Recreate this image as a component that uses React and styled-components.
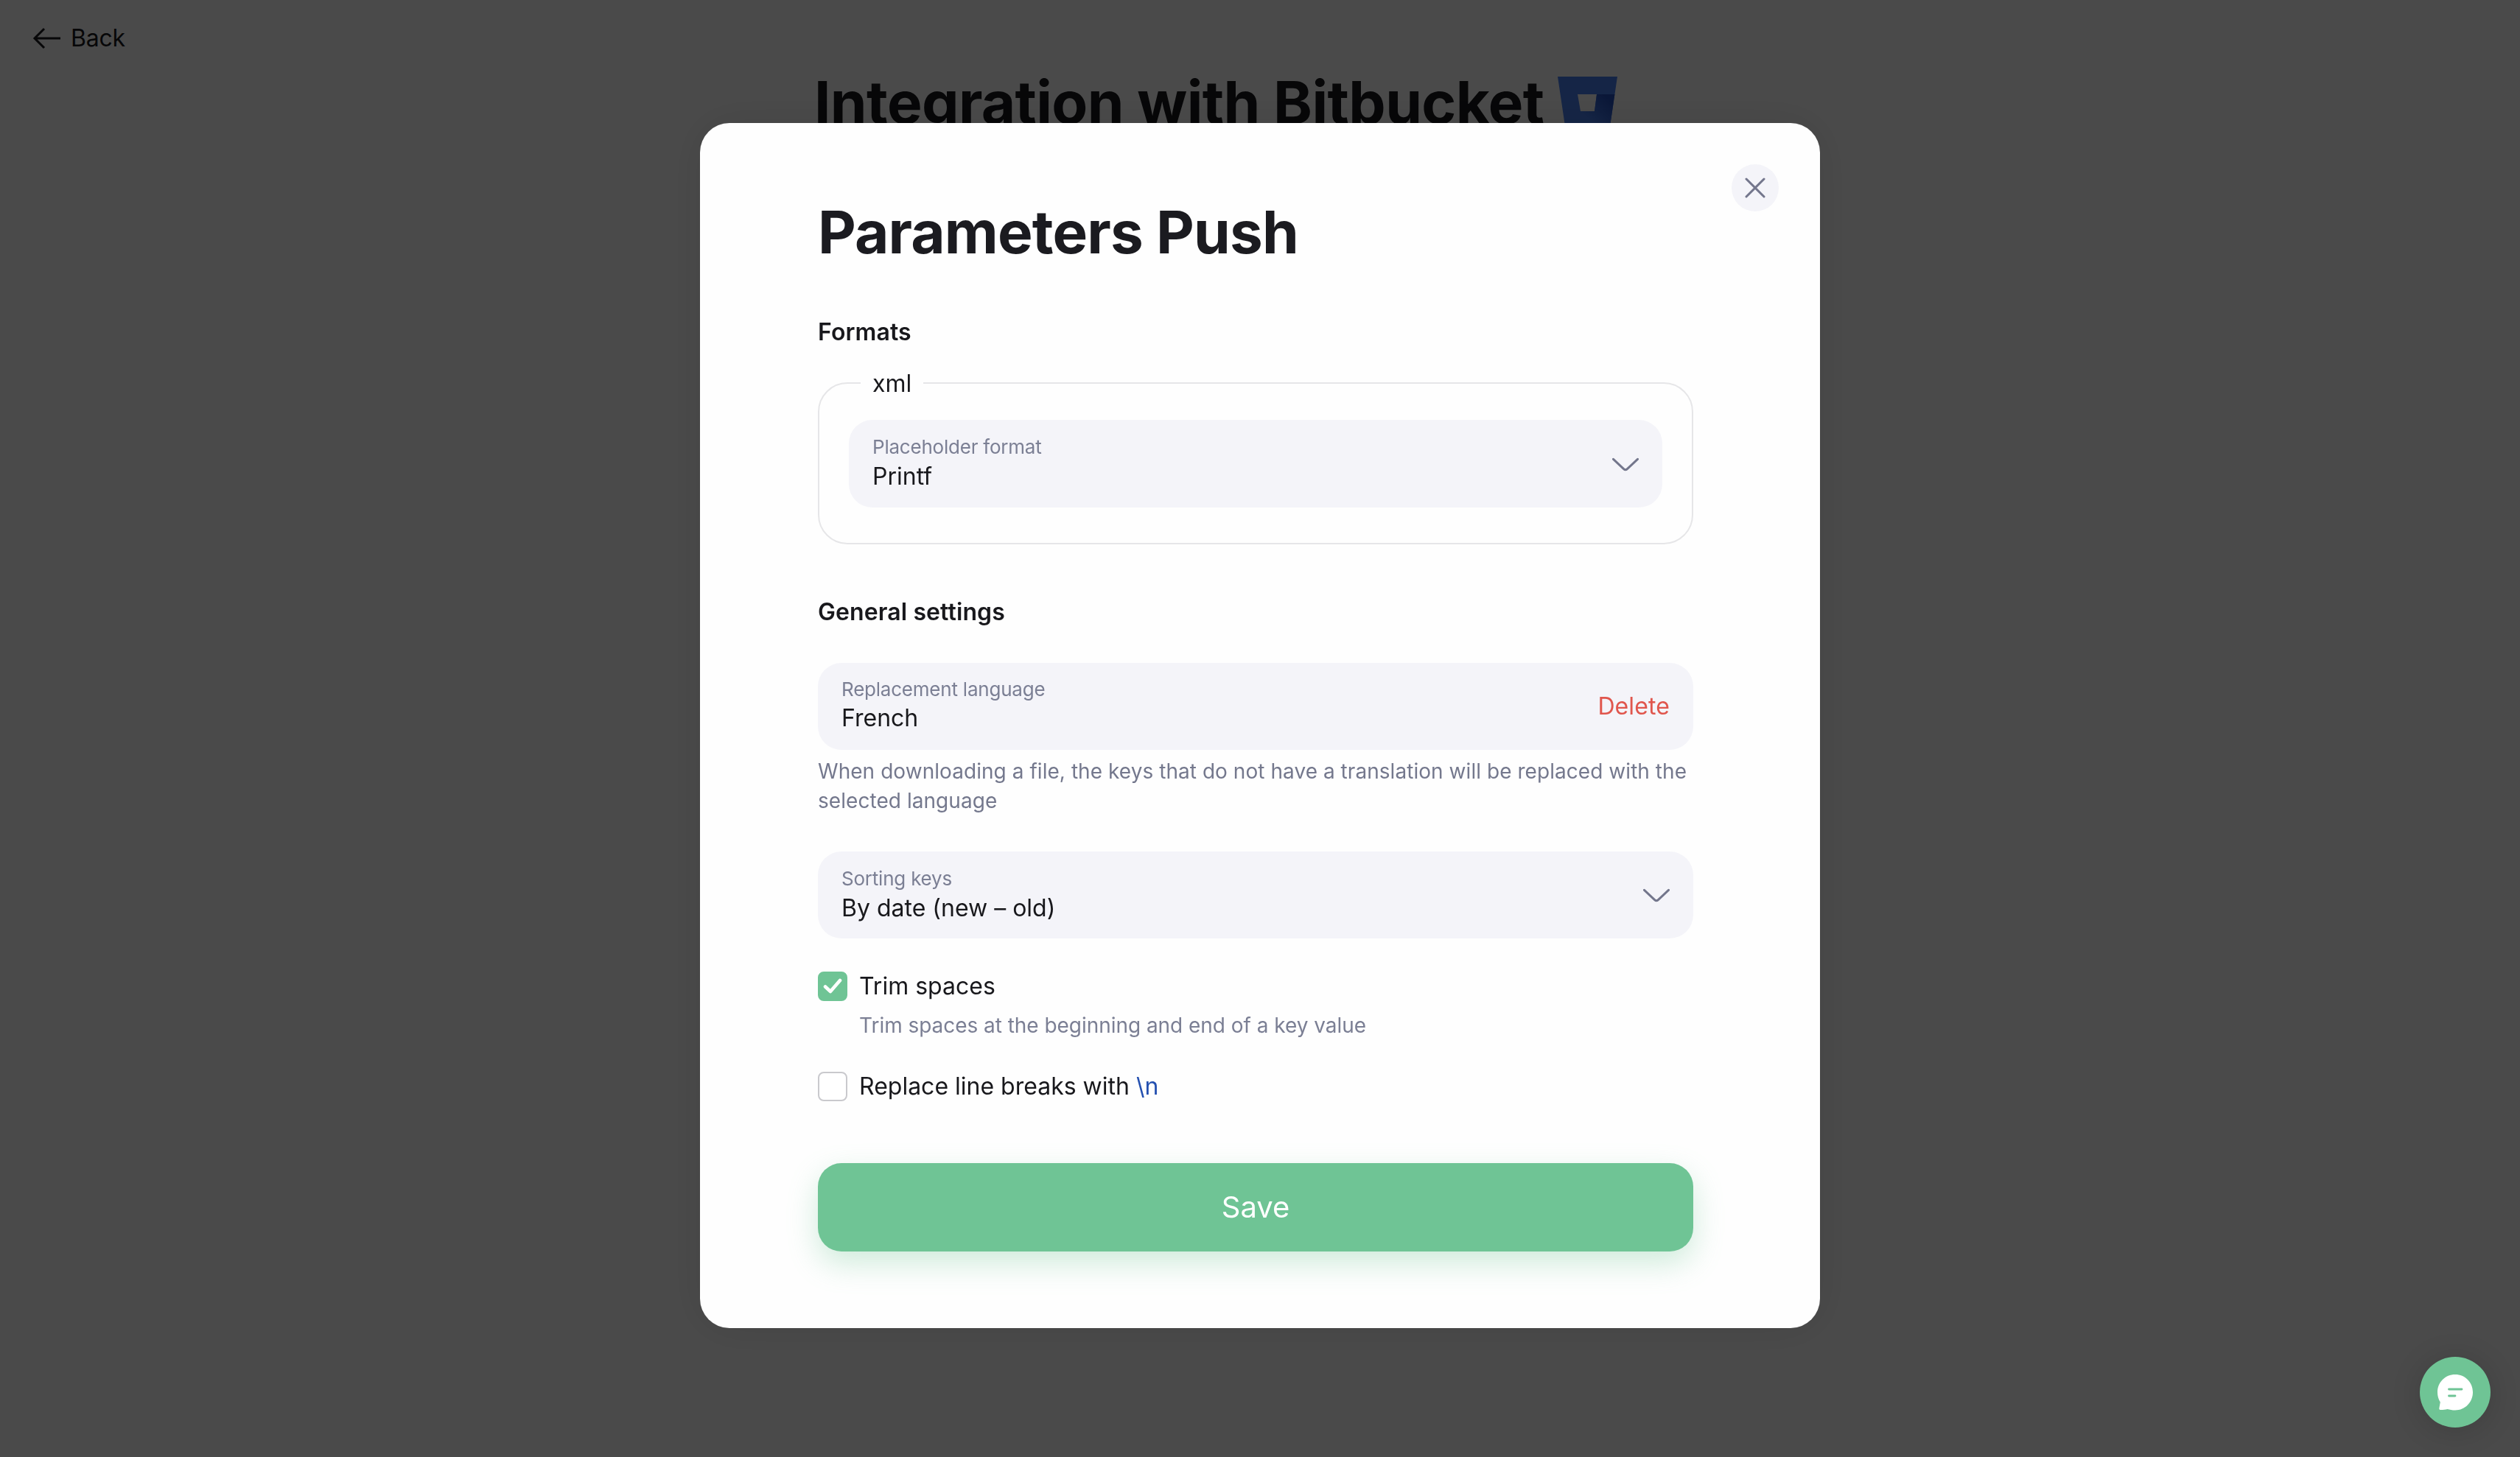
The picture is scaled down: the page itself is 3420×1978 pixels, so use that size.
import React, { useState } from "react";
import styled, { createGlobalStyle } from "styled-components";

const GlobalStyle = createGlobalStyle`
  * {
    box-sizing: border-box;
  }
  body {
    margin: 0;
    background: #fff;
    color: #18181c;
    font-family: Inter, "Liberation Sans", sans-serif;
    font-size: 32px;
    line-height: 40px;
    overflow: hidden;
  }
  button {
    font: inherit;
    border: none;
    padding: 0;
    background: none;
    cursor: pointer;
  }
`;

const Page = styled.div`
  height: 100vh;
  display: flex;
  flex-direction: column;
`;
const BackLink = styled.button`
  display: flex;
  align-items: center;
  align-self: flex-start;
  gap: 12px;
  margin: 32px 0 0 44px;
  color: #18181c;
  letter-spacing: -0.2px;
`;
const PageTitle = styled.h1`
  display: flex;
  align-items: flex-start;
  gap: 19px;
  width: 1210px;
  margin: 19px auto 0;
  font-size: 80px;
  line-height: 96px;
  font-weight: 700;
  letter-spacing: -0.62px;
  white-space: nowrap;
`;
const Logo = styled.svg`
  margin-top: 13px;
  flex: none;
`;

const Overlay = styled.div`
  position: fixed;
  inset: 0;
  display: flex;
  justify-content: center;
  align-items: flex-start;
  padding-top: 167px;
  background: rgba(0, 0, 0, 0.71);
`;
const Modal = styled.form`
  position: relative;
  width: 1520px;
  height: 1636px;
  padding: 100px 172px 0 160px;
  display: flex;
  flex-direction: column;
  border-radius: 40px;
  background: #fefefe;
  box-shadow: 0 0 60px rgba(0, 0, 0, 0.1);
`;
const CloseButton = styled.button`
  position: absolute;
  top: 56px;
  right: 56px;
  width: 64px;
  height: 64px;
  display: flex;
  align-items: center;
  justify-content: center;
  border-radius: 50%;
  background: #f4f4f9;
  color: #73768c;
`;
const Title = styled.h2`
  margin: 0 0 68px;
  font-size: 80px;
  line-height: 96px;
  font-weight: 700;
  letter-spacing: -0.85px;
  color: #1b1b20;
`;
const SectionTitle = styled.h3`
  margin: 0 0 ${(p) => p.$gap}px;
  font-size: 32px;
  line-height: 40px;
  font-weight: 600;
  letter-spacing: 0.1px;
`;
const Group = styled.fieldset`
  margin: 0 0 72px;
  padding: 29px 40px 48px;
  border: 2px solid #e6e6e8;
  border-radius: 40px;
`;
const Legend = styled.legend`
  margin-left: 16px;
  padding: 2px 16px 0;
`;

const Field = styled.div`
  height: ${(p) => p.$height || 118}px;
  padding: 0 32px;
  display: flex;
  align-items: center;
  justify-content: space-between;
  border-radius: 32px;
  background: #f4f4f9;
`;
const FieldText = styled.div`
  display: flex;
  flex-direction: column;
  align-self: flex-start;
  gap: ${(p) => (p.$compact ? 3 : 4)}px;
  padding-top: ${(p) => (p.$compact ? 20 : 21)}px;
`;
const FieldLabel = styled.span`
  font-size: 26px;
  line-height: 32px;
  letter-spacing: -0.22px;
  color: #7b7f94;
`;
const DeleteButton = styled.button`
  color: #e0564d;
  letter-spacing: 0.1px;
`;
const Hint = styled.p`
  margin: 9px 0 49px;
  font-size: 28px;
  letter-spacing: 0.05px;
  color: #74788d;
`;

const CheckRow = styled.label`
  display: flex;
  align-items: center;
  gap: 16px;
  margin-top: ${(p) => p.$gap}px;
`;
const CheckBox = styled.span`
  width: 40px;
  height: 40px;
  display: flex;
  align-items: center;
  justify-content: center;
  border-radius: 8px;
  border: 2px solid ${(p) => (p.$checked ? "#6fc495" : "#c9c9cd")};
  background: ${(p) => (p.$checked ? "#6fc495" : "#fff")};
`;
const HiddenInput = styled.input`
  display: none;
`;
const CheckHint = styled.p`
  margin: 13px 0 0 56px;
  font-size: 28px;
  letter-spacing: -0.04px;
  color: #7b7f94;
`;
const Code = styled.span`
  color: #2450b0;
`;
const SaveButton = styled.button`
  height: 120px;
  margin-top: 84px;
  border-radius: 32px;
  background: #6fc495;
  color: #fff;
  font-size: 40px;
  box-shadow: 0 16px 40px rgba(111, 196, 149, 0.33);
`;
const ChatButton = styled.button`
  position: fixed;
  right: 40px;
  bottom: 40px;
  width: 96px;
  height: 96px;
  border-radius: 50%;
  background: #6fc495;
  box-shadow: 0 4px 40px rgba(0, 0, 0, 0.15);
`;

const ChevronIcon = styled.svg`
  margin-top: 2px;
`;
const Chevron = () => (
  <ChevronIcon width="36" height="20" viewBox="0 0 36 20" fill="none" stroke="#73768c" strokeWidth="3" strokeLinecap="round">
    <path d="M1.5 2.3 L15.6 15.6 Q18 17.8 20.4 15.6 L34.5 2.3" />
  </ChevronIcon>
);

const Checkbox = ({ checked, onChange, gap, children }) => (
  <CheckRow $gap={gap}>
    <HiddenInput type="checkbox" checked={checked} onChange={onChange} />
    <CheckBox $checked={checked}>
      {checked && (
        <svg width="26" height="22" viewBox="0 0 26 22" fill="none" stroke="#fff" strokeWidth="4.6">
          <path d="M3 11.5 L10 18 L23 3" strokeLinecap="round" strokeLinejoin="round" />
        </svg>
      )}
    </CheckBox>
    <span>{children}</span>
  </CheckRow>
);

function App() {
  const [trim, setTrim] = useState(true);
  const [lineBreaks, setLineBreaks] = useState(false);

  return (
    <>
      <GlobalStyle />
      <Page>
        <BackLink>
          <svg width="40" height="30" viewBox="0 0 40 30" fill="none" stroke="currentColor" strokeWidth="3">
            <path d="M38 15 H3 M16 2 L3 15 L16 28" />
          </svg>
          Back
        </BackLink>
        <PageTitle>
          Integration with Bitbucket
          <Logo width="81" height="74" viewBox="0 0 81 74">
            <defs>
              <linearGradient id="bucket" x1="1" y1="0.1" x2="0.4" y2="0.7">
                <stop offset="0.15" stopColor="#2450c0" />
                <stop offset="1" stopColor="#4a80f0" />
              </linearGradient>
            </defs>
            <path d="M0 0 H81 L70 74 H11 Z M27 24 L31 47 H50 L53 24 Z" fill="#4a80f0" fillRule="evenodd" />
            <path d="M53 24 H77.4 L70 74 H22 L31 47 H50 Z" fill="url(#bucket)" />
          </Logo>
        </PageTitle>
      </Page>

      <Overlay>
        <Modal onSubmit={(e) => e.preventDefault()}>
          <CloseButton type="button">
            <svg width="30" height="30" viewBox="0 0 30 30" fill="none" stroke="currentColor" strokeWidth="3">
              <path d="M3 3 L27 27 M27 3 L3 27" strokeLinecap="round" />
            </svg>
          </CloseButton>
          <Title>Parameters Push</Title>

          <SectionTitle $gap={28}>Formats</SectionTitle>
          <Group>
            <Legend>xml</Legend>
            <Field $height={119}>
              <FieldText>
                <FieldLabel>Placeholder format</FieldLabel>
                <span>Printf</span>
              </FieldText>
              <Chevron />
            </Field>
          </Group>

          <SectionTitle $gap={49}>General settings</SectionTitle>
          <Field>
            <FieldText $compact>
              <FieldLabel>Replacement language</FieldLabel>
              <span>French</span>
            </FieldText>
            <DeleteButton type="button">Delete</DeleteButton>
          </Field>
          <Hint>
            When downloading a file, the keys that do not have a translation will be replaced with the selected language
          </Hint>
          <Field>
            <FieldText>
              <FieldLabel>Sorting keys</FieldLabel>
              <span>By date (new – old)</span>
            </FieldText>
            <Chevron />
          </Field>

          <Checkbox gap={45} checked={trim} onChange={() => setTrim(!trim)}>
            Trim spaces
          </Checkbox>
          <CheckHint>Trim spaces at the beginning and end of a key value</CheckHint>
          <Checkbox gap={43} checked={lineBreaks} onChange={() => setLineBreaks(!lineBreaks)}>
            Replace line breaks with <Code>\n</Code>
          </Checkbox>

          <SaveButton type="submit">Save</SaveButton>
        </Modal>
      </Overlay>

      <ChatButton>
        <svg width="96" height="96" viewBox="0 0 96 96">
          <path
            d="M48 24 C61.5 24 72 34.5 72 48 C72 61.5 61.5 72.5 48 72.5 C44 72.5 40.5 71.8 37.5 71 C34 71.6 30.5 72.3 27.5 72 C26.3 71.8 26.2 70.6 26.4 69.6 L27.8 61.5 C25.3 57.5 24 53 24 48 C24 34.5 34.5 24 48 24 Z"
            fill="#fff"
          />
          <path d="M39.5 44 H57 M39.5 53 H48" stroke="#6fc495" strokeWidth="2.8" strokeLinecap="round" />
        </svg>
      </ChatButton>
    </>
  );
}

export default App;
